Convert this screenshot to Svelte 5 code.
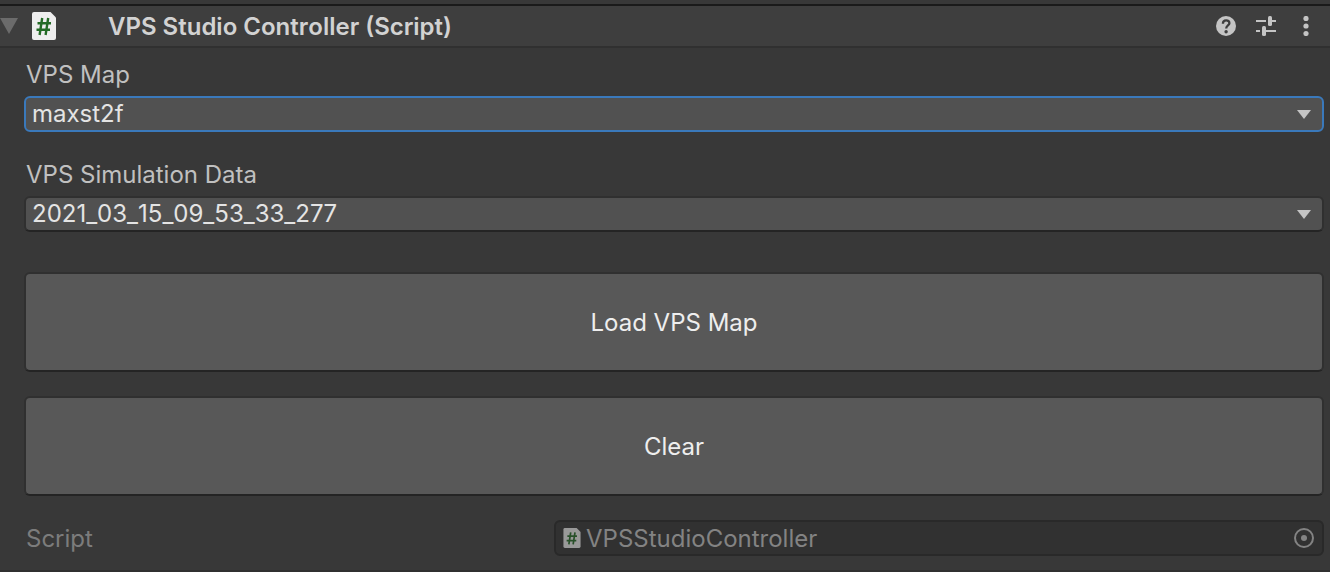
<script>
  const maps = ['maxst2f'];
  const simulations = ['2021_03_15_09_53_33_277'];
  let map = $state(maps[0]);
  let simulation = $state(simulations[0]);
  let open = $state(true);
</script>

{#snippet scriptIcon(size)}
  <svg class="script-icon {size}" viewBox="0 0 24 28" aria-hidden="true">
    <path d="M2 0H18.500L24 5.500V26a2 2 0 0 1-2 2H2a2 2 0 0 1-2-2V2a2 2 0 0 1 2-2Z" fill="#eeeeee" />
    <path d="M10.200 6 7.600 23M16.200 6 13.600 23M5.500 11.300H19M4.500 17.700H18" fill="none" stroke="#236b25" stroke-width="2.400" />
  </svg>
{/snippet}

{#snippet arrow()}
  <svg class="arrow" viewBox="0 0 14 9" aria-hidden="true"><path d="M0 0H14L7 9Z" fill="#c4c4c4" /></svg>
{/snippet}

<section class="inspector">
  <header>
    <button class="fold" aria-label="Toggle component" aria-expanded={open} onclick={() => (open = !open)}>
      <svg class:closed={!open} viewBox="0 0 18 16" width="18" height="16"><path d="M0 0H18L9 16Z" fill="#6b6b6b" /></svg>
    </button>
    {@render scriptIcon('large')}
    <h1>VPS Studio Controller (Script)</h1>
    <div class="tools">
      <button aria-label="Help">
        <svg viewBox="0 0 20 20" width="20" height="20">
          <circle cx="10" cy="10" r="10" fill="#c4c4c4" />
          <path d="M6.900 7.700C6.900 3.300 13.400 3.300 13.400 7.200C13.400 9.500 10.200 9.500 10.200 12.500" fill="none" stroke="#3e3e3e" stroke-width="2.300" />
          <circle cx="10.100" cy="15.700" r="1.700" fill="#3e3e3e" />
        </svg>
      </button>
      <button aria-label="Presets">
        <svg viewBox="0 0 20 20" width="20" height="20" fill="#c4c4c4">
          <path d="M0 4H10V6H0ZM16 4H20V6H16ZM0 14H4V16H0ZM10 14H20V16H10Z" />
          <rect x="12" width="4" height="10" rx="1.500" />
          <rect x="6" y="10" width="4" height="10" rx="1.500" />
        </svg>
      </button>
      <button aria-label="More options">
        <svg viewBox="0 0 20 20" width="20" height="20" fill="#c4c4c4">
          <circle cx="10" cy="2.500" r="2.600" /><circle cx="10" cy="10" r="2.600" /><circle cx="10" cy="17.500" r="2.600" />
        </svg>
      </button>
    </div>
  </header>

  {#if open}
    <div class="content">
      <div class="field">
        <label for="map">VPS Map</label>
        <div class="dropdown">
          <select id="map" class="active" bind:value={map}>
            {#each maps as item}<option>{item}</option>{/each}
          </select>
          {@render arrow()}
        </div>
      </div>
      <div class="field">
        <label for="simulation">VPS Simulation Data</label>
        <div class="dropdown">
          <select id="simulation" bind:value={simulation}>
            {#each simulations as item}<option>{item}</option>{/each}
          </select>
          {@render arrow()}
        </div>
      </div>
      <div class="actions">
        <button>Load VPS Map</button>
        <button>Clear</button>
      </div>
      <div class="reference">
        <label for="script">Script</label>
        <div class="object">
          {@render scriptIcon('small')}
          <input id="script" value="VPSStudioController" disabled />
          <button aria-label="Select script" disabled>
            <svg viewBox="0 0 20 20" width="20" height="20">
              <circle cx="10" cy="10" r="9" fill="none" stroke="#838383" stroke-width="2" />
              <circle cx="10" cy="10" r="3" fill="#838383" />
            </svg>
          </button>
        </div>
      </div>
    </div>
  {/if}
</section>

<style>
  :global(body) {
    margin: 0;
    background: #383838;
  }

  .inspector,
  button,
  select,
  input {
    font-family: Inter, 'Liberation Sans', sans-serif;
    font-size: 24px;
    line-height: 32px;
  }

  .inspector {
    padding-top: 4px;
    color: #c0c0c0;
    border-bottom: 2px solid #303030;
  }

  svg {
    display: block;
    flex: none;
  }

  button {
    margin: 0;
    padding: 0;
    border: 0;
    background: none;
    color: inherit;
  }

  header {
    display: flex;
    align-items: center;
    height: 40px;
    padding-right: 14px;
    border-top: 2px solid #1a1a1a;
    border-bottom: 2px solid #303030;
    background: #3e3e3e;
  }

  .fold {
    width: 32px;
  }

  .closed {
    transform: rotate(-90deg);
  }

  .script-icon.large {
    width: 24px;
    height: 28px;
  }

  .script-icon.small {
    width: 18px;
    height: 20px;
    opacity: 0.55;
  }

  h1 {
    flex: 1;
    margin: 0 0 0 52px;
    padding-top: 2px;
    font-size: 24px;
    font-weight: 600;
    line-height: 32px;
    font-kerning: none;
    color: #d2d2d2;
  }

  .tools {
    display: flex;
    gap: 20px;
  }

  .content {
    padding: 10px 6px 14px 24px;
  }

  .field {
    margin-bottom: 26px;
  }

  label {
    display: block;
    padding: 2px 0 0 2px;
    line-height: 30px;
  }

  .field label {
    margin-bottom: 6px;
  }

  .dropdown {
    display: grid;
    align-items: center;
  }

  .dropdown > :global(*) {
    grid-area: 1 / 1;
  }

  .arrow {
    width: 14px;
    height: 9px;
    justify-self: end;
    margin-right: 13px;
    pointer-events: none;
  }

  select {
    appearance: none;
    box-sizing: border-box;
    width: 100%;
    height: 36px;
    margin: 0;
    padding: 0 40px 0 6px;
    border: 2px solid #303030;
    border-bottom-color: #242424;
    border-radius: 6px;
    outline: 0;
    background: #515151;
    color: #e4e4e4;
    font-kerning: none;
  }

  select.active,
  select:focus {
    border-color: #3a79bb;
  }

  .actions {
    display: grid;
    gap: 24px;
    margin: 40px 0 24px;
  }

  .actions button {
    height: 100px;
    padding-top: 2px;
    border: 2px solid #303030;
    border-bottom-color: #242424;
    border-radius: 6px;
    background: #585858;
    color: #eeeeee;
  }

  .actions button:active {
    background: #46607c;
  }

  .reference {
    display: grid;
    grid-template-columns: 53fr 77fr;
    align-items: center;
    color: #7c7c7c;
  }

  .object {
    display: flex;
    align-items: center;
    box-sizing: border-box;
    height: 36px;
    min-width: 0;
    padding: 0 8px 0 7px;
    border: 2px solid #292929;
    border-radius: 6px;
    background: #313131;
  }

  input {
    flex: 1;
    min-width: 0;
    height: 32px;
    margin: 0;
    padding: 2px 0 0 5px;
    box-sizing: border-box;
    border: 0;
    background: none;
    color: #838383;
  }
</style>
